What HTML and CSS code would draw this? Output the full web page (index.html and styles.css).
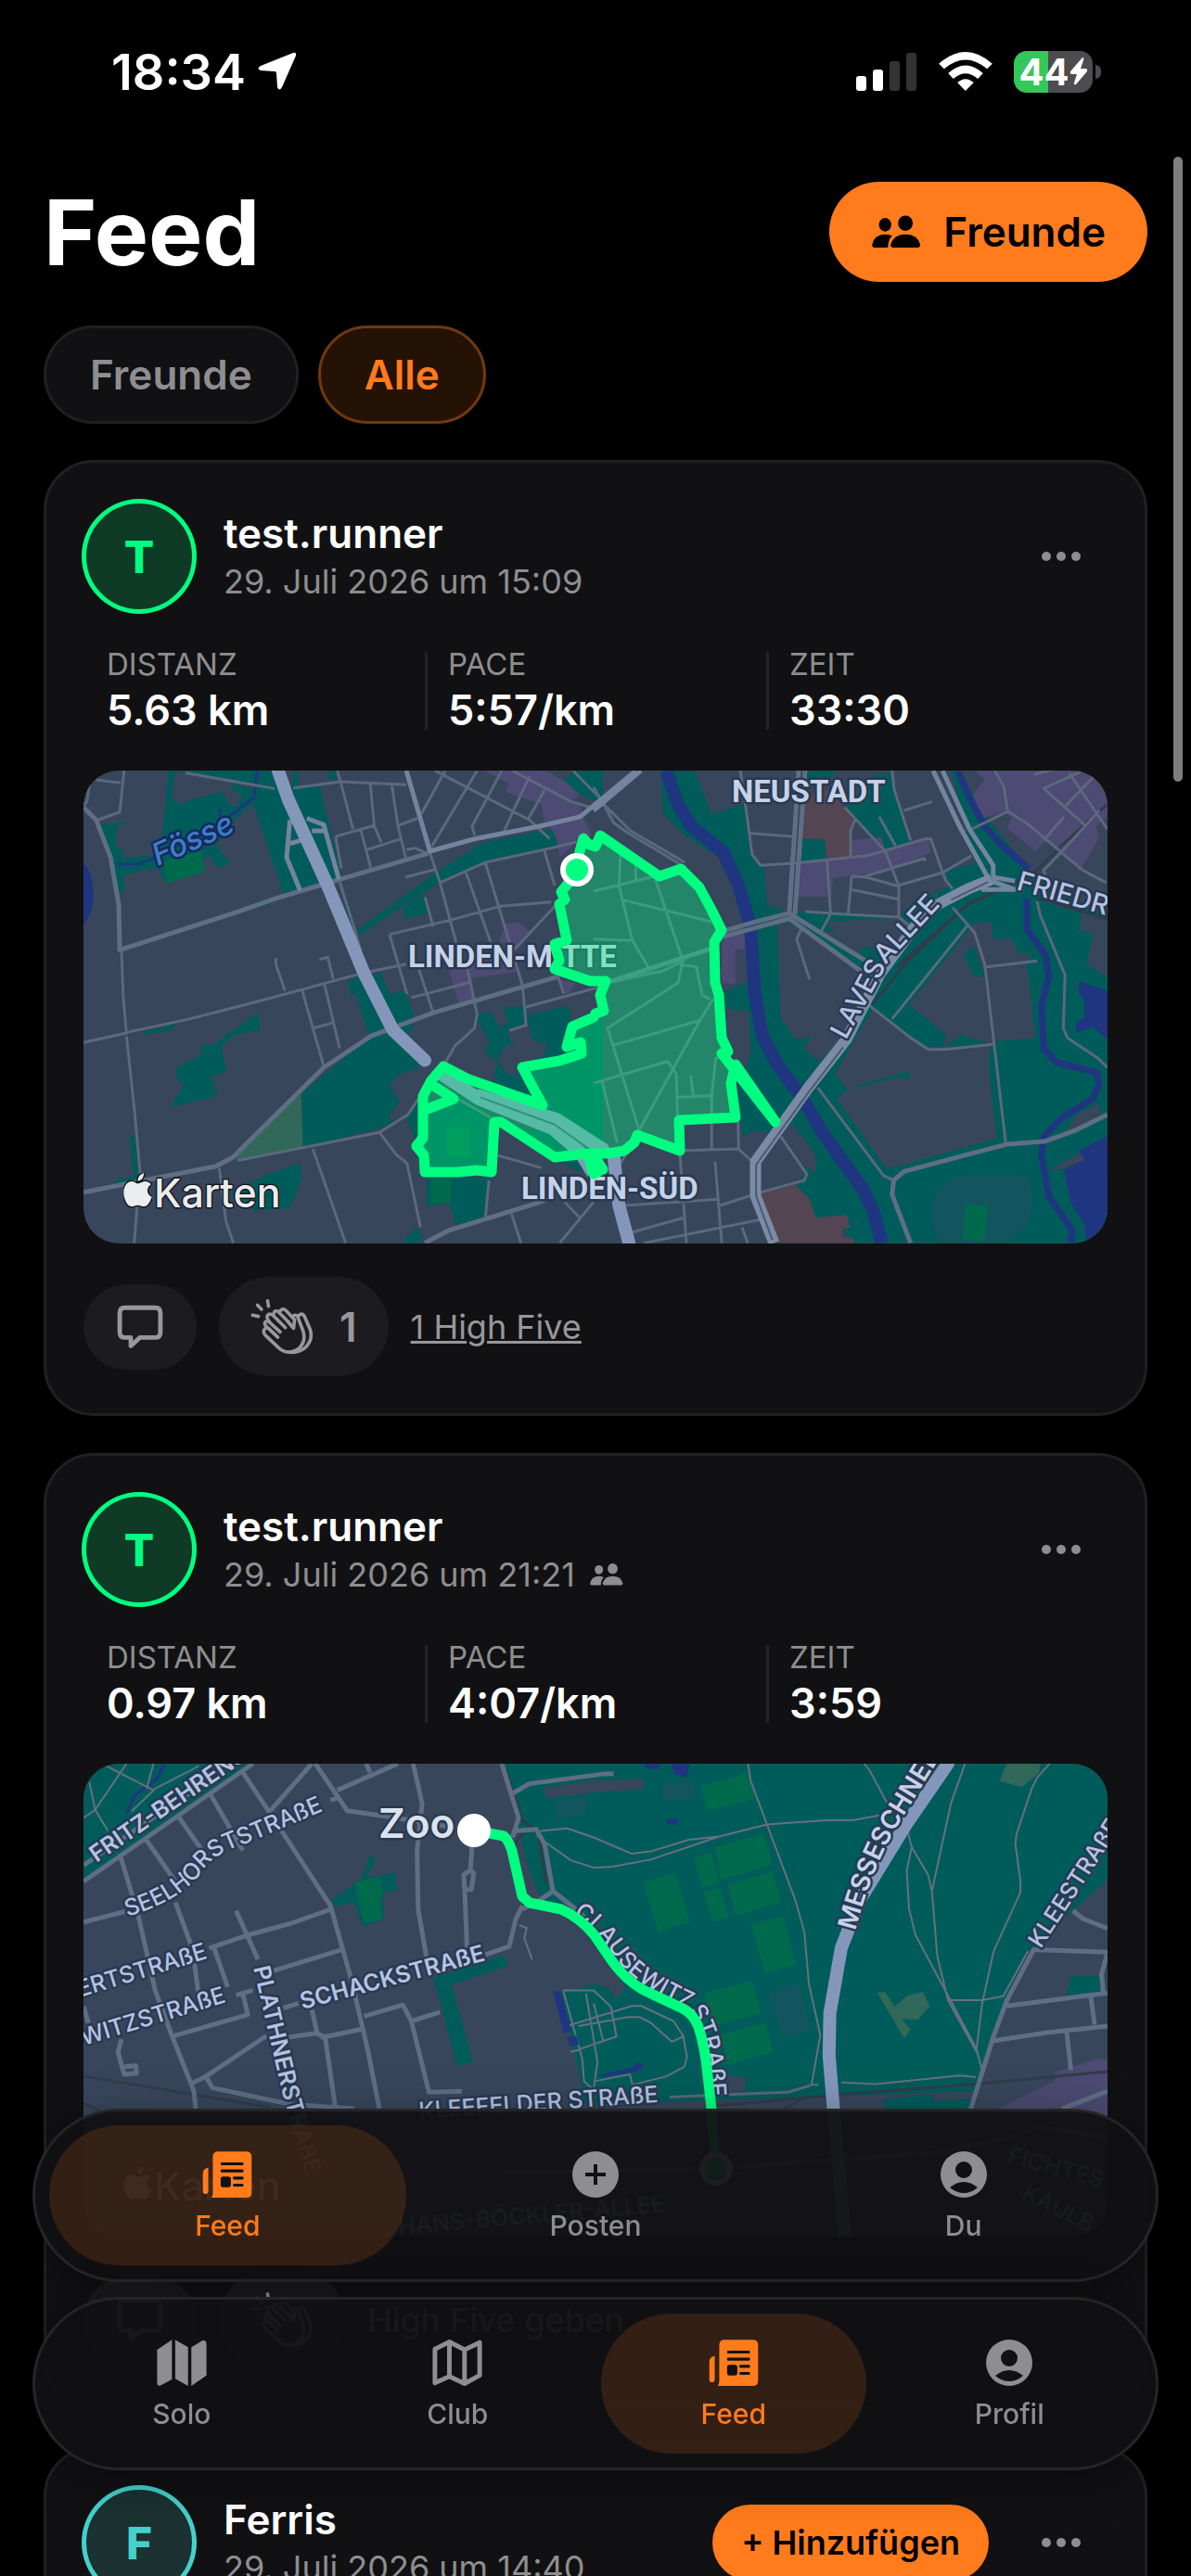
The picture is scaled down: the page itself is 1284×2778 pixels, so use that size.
FILE: index.html
```html
<!DOCTYPE html>
<html lang="de">
<head>
    <meta charset="UTF-8">
    <meta name="viewport" content="width=device-width, initial-scale=1.0">
    <title>Feed</title>
    <link rel="stylesheet" href="styles.css">
</head>
<body>
    <!-- shared icons -->
    <svg class="sprite" aria-hidden="true">
        <symbol id="i-friends" viewBox="0 0 160 106">
            <ellipse cx="43" cy="30" rx="20" ry="22"/>
            <ellipse cx="109" cy="25" rx="24" ry="25"/>
            <path d="M8 104 Q0 104 1 94 Q8 62 43 61 Q56 61 66 66 Q53 78 52 104Z"/>
            <path d="M70 104 Q60 104 61 94 Q72 61 109 61 Q147 61 157 94 Q158 104 148 104Z"/>
        </symbol>
        <symbol id="i-dots" viewBox="0 0 44 12">
            <circle cx="6" cy="6" r="5"/><circle cx="22" cy="6" r="5"/><circle cx="38" cy="6" r="5"/>
        </symbol>
        <symbol id="i-comment" viewBox="136 108 154 146">
            <path d="M162 118 H264 Q281 118 281 136 V201 Q281 218 264 218 H212 L182 246 V218 H162 Q145 218 145 201 V136 Q145 118 162 118Z" fill="none" stroke="currentColor" stroke-width="15" stroke-linejoin="round"/>
        </symbol>
        <symbol id="i-clap" viewBox="568 88 206 184">
            <g fill="none" stroke="currentColor" stroke-width="11" stroke-linecap="round" stroke-linejoin="round">
                <path d="M575 143 L594 147 M591 110 L604 124 M624 96 L627 114"/>
                <path d="M657 215 L627 186 Q613 182 611 197 Q612 205 618 210 L664 253 Q695 276 728 250 Q750 228 740 195 L722 148 Q714 138 706 148"/>
                <path d="M657 215 L620 180 Q610 170 618 164 Q623 160 630 166 L665 198"/>
                <path d="M630 164 Q618 150 625 142 Q634 136 644 146 L682 184"/>
                <path d="M643 144 Q643 126 657 130 L695 168"/>
                <path d="M663 132 Q672 117 684 128 L712 158 L709 186 L690 164"/>
                <path d="M726 144 Q736 134 744 146 L763 190 Q774 225 745 251 Q728 265 700 265"/>
            </g>
        </symbol>
        <symbol id="i-feed" viewBox="387 62 162 154">
            <path d="M438 63 H531 Q549 63 549 81 V198 Q549 216 531 216 H415 Q420 210 420 198 V81 Q420 63 438 63Z"/>
            <path d="M405 116 Q387 120 387 136 V195 Q388 204 396 204 Q404 204 405 195Z"/>
            <g class="ink"><rect x="446" y="99" width="76" height="9" rx="4"/><rect x="446" y="122" width="76" height="10" rx="4"/><rect x="446" y="146" width="34" height="35" rx="8"/><rect x="487" y="146" width="35" height="10" rx="4"/><rect x="487" y="170" width="35" height="9" rx="4"/></g>
        </symbol>
        <symbol id="i-map" viewBox="246 681 150 141">
            <path d="M246 712 L291 682 V802 L258 820 Q246 824 246 812Z M301 682 L340 704 V822 L301 800Z M350 704 L384 684 Q396 682 396 694 V790 L350 822Z"/>
        </symbol>
        <symbol id="i-map-line" viewBox="1134 681 150 141">
            <path d="M1141 710 L1185 688 L1231 712 L1277 690 V790 L1231 815 L1185 793 L1141 813Z M1185 688 V793 M1231 712 V815" fill="none" stroke="currentColor" stroke-width="14" stroke-linejoin="round"/>
        </symbol>
        <symbol id="i-user" viewBox="0 0 50 50">
            <circle cx="25" cy="25" r="25"/>
            <g class="ink"><circle cx="25" cy="20" r="9"/><path d="M10 39 Q25 27 40 39 Q33 45 25 45 Q17 45 10 39Z"/></g>
        </symbol>
        <symbol id="i-plus" viewBox="0 0 50 50">
            <circle cx="25" cy="25" r="25"/>
            <path class="ink" d="M23 14 h4 v9 h9 v4 h-9 v9 h-4 v-9 h-9 v-4 h9Z"/>
        </symbol>
        <symbol id="i-apple" viewBox="0 0 32 40">
            <path d="M16 12 C19 12 21 9 25 9.500 C28 10 30 11 31 13 C25 17 26 25 32 27 C30 33 27 38 23 38 C20 38 19 36.500 16 36.500 C13 36.500 12 38 9 38 C4 38 0 29 0 22 C0 14 5 9.500 9 9.500 C12 9.500 14 12 16 12Z M16 9 C16 4 19 1 23 0 C23 5 20 9 16 9Z"/>
        </symbol>
    </svg>

    <div class="app">
        <div class="status">
            <div class="status-side">
                <span class="clock">18:34</span>
                <svg class="loc" viewBox="0 0 42 42" fill="currentColor"><path d="M38 1 Q42 0 41 4 L26 38 Q23 43 21 38 L20 23 Q20 21 18 21 L3 20 Q-2 18 3 15Z"/></svg>
            </div>
            <div class="status-side">
                <svg class="signal" viewBox="0 0 66 42"><rect y="26" width="11" height="16" rx="3" fill="#fff"/><rect x="18" y="19" width="11" height="23" rx="3" fill="#fff"/><rect x="36" y="10" width="11" height="32" rx="3" fill="#333"/><rect x="54" y="1" width="11" height="41" rx="3" fill="#333"/></svg>
                <svg class="wifi" viewBox="338 72 173 126" fill="#fff"><path d="M338 110 Q424 34 511 110 L494 127 Q424 68 355 127Z M368 141 Q424 90 481 141 L464 159 Q424 124 385 159Z M398 171 Q424 148 451 171 L424 198Z"/></svg>
                <div class="battery">
                    <span class="battery-body">44<svg viewBox="0 0 20 30" fill="#fff"><path d="M14 0 Q16 0 15 3 L12 12 H18 Q20 13 19 15 L7 29 Q4 30 5 27 L8 18 H2 Q0 17 1 15Z"/></svg></span>
                    <span class="battery-tip"></span>
                </div>
            </div>
        </div>

        <header class="header">
            <h1>Feed</h1>
            <button class="friends-btn"><svg class="friends-icon"><use href="#i-friends"/></svg>Freunde</button>
        </header>

        <div class="chips">
            <button class="chip">Freunde</button>
            <button class="chip active">Alle</button>
        </div>

        <main class="feed">
            <article class="card">
                <div class="card-head">
                    <span class="avatar">T</span>
                    <div class="who">
                        <h2>test.runner</h2>
                        <p>29. Juli 2026 um 15:09</p>
                    </div>
                    <button class="more" aria-label="Mehr"><svg><use href="#i-dots"/></svg></button>
                </div>
                <dl class="stats">
                    <div><dt>DISTANZ</dt><dd>5.63 km</dd></div>
                    <div><dt>PACE</dt><dd>5:57/km</dd></div>
                    <div><dt>ZEIT</dt><dd>33:30</dd></div>
                </dl>
                <svg class="map" viewBox="0 0 1104 510" preserveAspectRatio="xMidYMid slice">
                    <!-- west half -->
                    <g transform="translate(-10 -11) scale(.3635 .338)">
                        <path class="park" d="M75 206 L163 194 L127 212 L122 268 L150 297 L135 312 L232 303 L270 295 L262 385 L250 340 L144 367 L152 415 L135 420Z
                            M280 33 L598 33 L640 130 L725 400 L620 425 L530 140 L465 200 L420 270 L464 330 L425 343 L400 305 L380 320 L388 355 L275 390 L250 345 L262 230Z
                            M650 33 L664 33 L670 85 L728 83 L795 375 L740 395 L640 130Z M750 33 H780 L775 65 L755 60Z
                            M840 540 L1070 360 L1210 262 L1490 205 L1490 255 L1225 325 L1085 390 L975 465 L845 560Z M975 470 L1035 430 L1050 490 L978 505Z
                            M812 700 L910 675 L935 745 L980 735 L1008 815 L998 870 L870 870 L835 745 L818 750Z
                            M675 1060 L880 880 L940 860 L1035 975 L960 1005 L935 1040 L965 1090 L935 1130 L945 1160 L920 1170 L678 1235Z
                            M547 803 L551 860 L480 875 L436 912 L452 993 L405 1010 L427 1070 L285 1107 L325 1037 L303 1015 L303 980 L370 945 L385 905 L415 905Z
                            M1195 812 L1235 800 L1262 850 L1285 840 L1273 788 L1335 785 L1335 840 L1285 870 L1304 915 L1280 905 L1255 960 L1225 940 L1220 912 L1232 895 L1198 835Z
                            M1340 812 L1465 782 L1480 840 L1568 800 V1240 L1385 1100 L1240 1040 L1257 960 L1285 1000 L1320 1005 L1330 970 L1395 940 L1402 905 L1360 893Z
                            M985 1140 L1035 1060 L1060 1020 L1240 1130 L1250 1300 L1030 1310 L1005 1190Z M1045 1330 H1230 L1220 1455 L1130 1483 L1112 1410 L1045 1425Z
                            M1250 1150 L1568 1230 V1300 L1490 1310 L1420 1265Z
                            M165 1197 H180 L193 1340 L117 1348 L118 1338 L175 1328Z M460 1380 L565 1325 L670 1285 L675 1335 L640 1428 L535 1437Z
                            M970 1540 L1015 1490 L1035 1520 L1020 1540Z M200 868 L300 840 L290 860 L205 878Z M525 458 L620 425 L570 465Z M1440 80 L1480 33 H1568 V140Z M800 460 L820 480 L835 560Z"/>
                        <path class="land" d="M300 33 L535 75 L535 92 L470 75 L470 97 L500 113 L480 150 L460 140 L440 100 L345 125 L320 142 L288 118Z M1055 1035 L1100 1070 L1060 1090Z"/>
                        <path class="pitch" d="M262 322 L375 290 L388 355 L278 392Z M1058 1335 h60 v78 h-60Z M1105 1170 h70 v95 h-70Z"/>
                        <path class="olive" d="M472 1267 L673 1062 L678 1235 L485 1275Z"/>
                        <path class="quarter" d="M1215 33 H1400 L1460 70 L1500 110 L1470 130 L1395 200 L1385 140 L1280 100 L1290 75 L1265 60Z M1385 120 L1495 130 L1510 180 L1535 240 L1500 250 L1440 310 L1430 250 L1400 190Z M1280 520 L1320 518 L1350 545 L1310 600 L1260 580Z M1110 660 L1305 610 L1310 675 L1180 695 L1190 770 L1140 775 L1120 700Z M1440 700 L1490 710 L1470 740 L1452 745Z"/>
                        <ellipse class="water" cx="10" cy="425" rx="47" ry="105"/>
                        <path class="stream" d="M130 331 H190 L240 310 L430 200 L490 155 L533 120 L543 33 M432 200 V155 M490 1420 H535"/>
                        <path class="road" d="M65 62 L138 72 M148 33 L135 165 L70 190 M45 75 L38 130 L28 145 M330 40 L595 90 M650 88 L790 68 L985 78 M780 33 L790 68 L827 220 M878 75 L890 208 L910 262 M942 80 L960 208 L983 310 M775 243 L890 208 M775 243 L792 345 M850 222 L880 345 M868 285 L965 252 M960 208 L1018 185 M985 285 L1012 280 L1050 300
                            M1100 33 L1030 170 M1070 33 L1350 190 L1410 250 M1195 33 L1060 275 M1268 33 L1180 210 L1188 240 M1350 50 L1275 225 M1395 95 L1345 190 M1300 33 L1470 130 L1530 150 M1480 33 L1568 130
                            M982 373 L1070 348 M1055 295 L1085 390 L1135 590 M1085 390 L1220 325 L1395 285 L1490 260 M1395 290 L1425 400 M1040 437 L1065 530 M935 555 L1115 510 L1265 465 L1415 452 M935 555 L987 745 M1160 352 L1235 580 M1220 328 L1330 720 L1340 845 L1290 862 M1430 460 L1300 610 M1000 757 L1175 708 M1165 660 L1195 810 L1187 855 L1130 910 L1098 970 M1022 665 L1063 800 M850 680 L985 650 M1435 690 L1452 745 M1340 787 L1568 720
                            M598 630 V650 L625 735 M727 635 L752 628 L768 697 M675 730 L740 975 M742 712 L787 918 M708 855 L768 837 M788 390 L832 540 L850 610
                            M905 1187 L957 1260 L987 1285 L1027 1490 M708 1240 L805 1540 M430 1300 L450 1470 L472 1540 M485 1277 L905 1187 L990 1130 L1040 1050 M1255 1260 L1385 1300 M1230 1340 L1220 1455 M1297 1447 L1325 1540 M1440 1540 L1540 1410 M1455 1410 L1500 1460 M155 880 L180 1130 L195 1310 L178 1540 M140 600 L145 750 L155 870 L28 900 M155 868 L330 828 L560 765 L840 683 M1130 1075 L1235 1140"/>
                        <path class="road wide" d="M28 150 L65 190 L108 310 L132 460 L135 605 L480 485 L600 440 L740 395 L880 350 L1050 297 M28 1378 L420 1295 L470 1267 L740 980 L880 880 L1065 805 L1435 690 M1040 1540 L1110 1500 L1395 1405"/>
                        <path class="road main" d="M985 33 L1055 290 L1190 250 L1380 210 L1500 180 L1568 120 M670 415 L630 310 L640 190 M690 185 L740 205 L785 380 M640 265 L690 250 M705 225 L745 225"/>
                        <path class="highway" d="M605 33 L635 125 L750 395 L860 680 L945 860 L1040 957"/>
                        <path class="highway" d="M1095 1005 L1200 1080 L1420 1175 L1500 1250 L1540 1320 M1200 1070 L1430 1145 L1568 1240"/>
                        <path class="gap" d="M1205 1075 L1425 1162 L1520 1235"/>
                    </g>
                    <!-- east half -->
                    <g transform="translate(550 -11) scale(.3635 .338)">
                        <path class="park" d="M200 33 H300 L350 172 L445 138 L480 330 L505 340 L515 460 L580 485 L700 480 L905 500 L950 450 L1060 400 L1040 350 L1130 330 L1060 33 H1080 L1180 200 L1300 360 L1524 500 V1540 H775 L735 1500 L755 1450 L660 1460 L600 1350 L630 1315 L560 1200 L480 1180 L440 1200 L430 1040 L465 940 L460 800 L385 790 L385 740 L470 700 L470 500 L400 330 L270 240 L205 170Z
                            M745 150 L840 40 L885 45 L940 255 L865 290 L775 190Z M640 33 H720 L680 80 L620 80Z"/>
                        <path class="land" d="M545 510 L575 515 L820 680 L750 870 L670 960 L625 920 L645 880 L600 890 L555 820Z M680 545 H715 L685 515 L905 503 L940 540 L870 630 L810 590 L785 615Z
                            M935 780 L1100 560 L1130 520 L1180 515 L1185 570 L1240 570 L1260 615 L1300 620 L1285 650 L1310 885 L1195 895 L1190 910 L1090 875 L1040 915 L1045 875 L1005 840Z
                            M755 1050 L715 1000 L830 790 L985 915 L1180 908 L1170 960 L1195 1205 L895 1297 H865 L722 1080Z M1445 490 L1524 510 V690 L1462 650 L1482 555 L1443 540Z M1350 1310 L1524 1200 V1245 L1400 1300Z M540 1200 L590 1160 L660 1260 V1315 L600 1280Z M1430 1130 L1495 1095 L1505 1130 L1400 1190Z"/>
                        <path class="park" d="M790 1035 L935 990 V1020 L905 1010 L760 1050Z M1095 620 L1130 590 L1160 690 L1130 690Z M885 825 L930 785 L1005 840 L975 885 L940 870Z"/>
                        <path class="bluish" d="M1010 1400 Q1030 1320 1150 1320 L1290 1325 Q1310 1400 1290 1480 L1220 1540 H1030 Q990 1480 1010 1400Z"/>
                        <path class="pitch" d="M1105 1412 L1170 1425 L1157 1535 L1092 1528Z"/>
                        <path class="brown" d="M620 140 L680 80 L745 150 L775 190 L760 220 L762 310 L692 312 L685 252 L612 248Z M495 1385 L600 1355 L640 1400 L660 1460 L750 1450 L760 1490 L735 1500 L740 1525 L770 1525 L775 1540 H545Z"/>
                        <path class="park" d="M615 250 L685 252 L690 320 H610Z"/>
                        <path class="quarter" d="M765 255 L855 245 L865 290 L995 250 L1000 295 L885 345 L765 370 L710 375 L705 435 H605 L610 330 L760 310Z M1130 33 H1524 V180 L1490 210 L1498 250 L1445 345 L1385 300 L1340 255 L1310 290 L1225 215 L1240 180 L1215 165 L1150 185 L1125 110 L1160 60Z M380 560 L455 545 V600 L420 605 V712 H380Z"/>
                        <path class="water" d="M1440 705 L1524 735 V890 L1480 850 L1430 870 V840 L1455 820 V765 L1438 740Z M1524 1200 L1440 1245 L1455 1275 L1395 1305 L1415 1410 L1455 1480 L1460 1540 H1524Z"/>
                        <path class="river" d="M215 33 L250 140 L290 210 L385 295 L430 400 L465 530 L478 740 L500 880 L545 970 L620 1080 L680 1190 L740 1280 L800 1370 L830 1440 L855 1540"/>
                        <path class="stream wide" d="M1080 33 L1120 130 L1160 210 L1210 270 L1290 345 M1285 440 V540 L1340 620 L1350 690 L1328 780 L1335 920 L1375 965 L1490 995 L1500 1030 L1480 1080 L1390 1140 L1335 1200 L1328 1260 L1350 1390 L1420 1500 L1415 1540"/>
                        <path class="rail" d="M1524 140 L1385 275 L1310 355 L1170 430 L1110 460 L940 630 L825 780 M1110 460 L960 600 L900 660 M1320 440 L1524 507"/>
                        <path class="road" d="M450 140 L470 300 L495 335 L600 328 L815 303 L985 250 H1000 L1035 358 L1045 385 L1065 410 M460 232 L597 243 M885 33 L892 95 L940 255 M920 160 L1003 132 M847 180 L895 272 M745 150 L865 290 L905 400 V498 M762 310 V225 L775 190 M765 370 L755 490 M692 320 L703 490 L675 545 M765 370 L805 372 L900 400 L1035 358 L1120 305 M765 413 L905 443 M805 370 L980 313 L985 322 M628 482 L755 492 L905 500 L950 540 M615 540 L602 570 L640 698
                            M1190 33 L1217 85 L1228 163 L1290 205 L1450 350 L1520 390 M1228 163 L1120 220 M1410 40 L1524 220 M1305 45 L1400 20 M1450 33 L1335 90 L1460 210 M1400 145 L1480 55 M1395 180 L1335 255 M1500 160 L1385 295 L1335 350 L1340 375
                            M1065 470 L1110 525 L1130 550 L1160 650 L1222 1220 M1160 660 L1315 640 M1110 525 L885 825 M815 780 L940 885 L993 922 H1040 L1190 905 M1315 450 L1325 495 L1398 685 L1393 855 L1405 885 L1495 950 L1524 980
                            M665 1045 L860 1325 L890 1340 M555 1200 L632 1320 L625 1340 L490 1380 M265 1245 L430 1240 L480 1290 M255 1240 L275 1540 M360 1280 L380 1540 M90 1420 L370 1400 M375 1420 L490 1380 M115 1505 L265 1460 M150 1540 L380 1490 L495 1465 M440 1490 L457 1540 M428 1140 L430 1240 M80 1285 L110 1230 L135 1180 M0 85 L60 200 L100 230 L270 340 M30 140 L110 225 L270 325 M435 33 L450 140
                            M0 417 L180 370 L265 640 L210 670 L20 715 M75 400 L115 575 L165 665 M85 445 L350 515 M80 290 L75 400 M0 570 L110 575 M265 640 L250 710 L40 855 M55 910 L315 830 L135 1180 M315 830 L355 760 M40 850 L135 1180 M0 1030 L220 960 L245 1000 L252 1240 M25 1025 L70 1220 M350 1240 L350 1070 L250 1075 M350 1070 L362 950 L380 945 M288 1005 L295 1070 M255 650 L305 660 L322 750 L345 762 M125 330 V380"/>
                        <path class="road wide" d="M608 33 L580 490 M627 33 L597 490 M385 545 L480 515 L580 488 L830 655 M385 562 L580 505 L790 670 L830 680 M940 1540 L885 1385 L890 1340 L920 1312 L1100 1260 L1225 1225 L1340 1215 L1430 1180 L1524 1130 M50 705 L350 600"/>
                        <path class="road main" d="M0 145 L125 33 M0 160 L140 33 M1007 33 L1085 210 L1170 375 M1035 33 L1115 220 L1185 335 V375 M1180 372 L1250 385 M1180 385 L1250 412 H1150"/>
                        <path class="road big" d="M1180 380 L1110 410 L1020 460 L960 520 L850 680 L750 890 L640 1040 L480 1280 V1390 L535 1540"/>
                        <path class="gap" d="M1170 388 L1060 445 M740 915 L640 1055 L482 1290 V1390 L530 1530"/>
                        <path class="highway" d="M60 1265 L75 1420 L105 1540"/>
                    </g>
                    <g class="place">
                        <text x="699" y="34">NEUSTADT</text>
                        <text x="350" y="212">LINDEN-MITTE</text>
                        <text x="472" y="462">LINDEN-SÜD</text>
                    </g>
                    <path id="lavesallee" d="M822 291 L868 206 L940 128" fill="none"/>
                    <text class="street avenue"><textPath href="#lavesallee">LAVESALLEE</textPath></text>
                    <text class="street avenue" transform="translate(1005 128) rotate(16)">FRIEDR</text>
                    <text class="stream-name" transform="translate(80 103) rotate(-24)">Fösse</text>
                    <path class="area" d="M535 87 L539 73 L552 82 L557 70 L621 114 L644 106 L664 126 L677 150 L688 172 L680 185 L681 229 L688 288 L697 324 L698 337 L703 374 L642 377 L643 410 L597 393 L583 410 L543 413 L508 417 L450 379 L443 379 L440 433 L368 433 L359 405 L366 396 L366 351 L388 319 L413 332 L495 361 L473 320 L537 305 L536 293 L521 298 L527 276 L561 261 L557 242 L563 227 L546 227 L508 214 L513 205 L508 187 L521 183 L513 144 L523 121Z"/>
                    <path class="route" d="M532 107 L535 87 L539 73 L544 79 L552 82 L557 70 L621 114 L644 106 L664 126 L677 150 L688 172 L680 185 L681 229 L685 242 L688 288 L695 303 L688 305 L746 379 L703 317 L698 337 L703 374 L642 377 L643 410 L597 393 L594 401 L583 410 L565 413 L543 413 L550 435 L560 430 L552 418 L543 413 L508 417 L450 379 L443 379 L440 433 L424 431 L404 433 L368 433 L367 415 L359 405 L366 396 L366 351 L375 334 L388 319 L413 332 L495 361 L473 320 L513 313 L537 305 L536 293 L521 298 L527 276 L550 266 L552 262 L561 259 L557 242 L563 227 L546 227 L508 214 L513 205 L508 187 L521 183 L513 144 L519 139 L515 131 L523 121Z M379 341 L399 354 L368 366"/>
                    <circle cx="532" cy="107" r="15" fill="#00ff80" stroke="#fff" stroke-width="6"/>
                    <use class="maps-logo" href="#i-apple" x="43" y="434" width="31" height="38"/>
                    <text class="maps-logo" x="76" y="471">Karten</text>
                </svg>
                <div class="actions">
                    <button class="comment" aria-label="Kommentieren"><svg><use href="#i-comment"/></svg></button>
                    <button class="clap" aria-label="High Five"><svg><use href="#i-clap"/></svg>1</button>
                    <a class="fives" href="#">1 High Five</a>
                </div>
            </article>

            <article class="card">
                <div class="card-head">
                    <span class="avatar">T</span>
                    <div class="who">
                        <h2>test.runner</h2>
                        <p>29. Juli 2026 um 21:21 <svg><use href="#i-friends"/></svg></p>
                    </div>
                    <button class="more" aria-label="Mehr"><svg><use href="#i-dots"/></svg></button>
                </div>
                <dl class="stats">
                    <div><dt>DISTANZ</dt><dd>0.97 km</dd></div>
                    <div><dt>PACE</dt><dd>4:07/km</dd></div>
                    <div><dt>ZEIT</dt><dd>3:59</dd></div>
                </dl>
                <svg class="map" viewBox="0 0 1104 510" preserveAspectRatio="xMidYMid slice">
                    <!-- park side -->
                    <g transform="translate(550 -152) scale(.4107 .3508)">
                        <path class="park" d="M-240 433 H1349 V790 L1140 1010 L1080 1160 L1000 1440 L760 1450 L0 1480 L-60 1460 L-30 1420 L-90 1137 L0 1110 L35 1120 L60 1155 L85 1120 L0 990 L-60 860 L-130 870 L-170 760Z M1240 1145 L1252 1085 H1330 V1135Z M760 1465 L890 1450 L895 1470 L990 1465 V1494 H765Z"/>
                        <path class="land" d="M-130 505 L0 485 L130 480 L132 510 L0 522 L-125 540Z M330 1390 L398 1398 V1440 L335 1450Z"/>
                        <path class="pitch" d="M282 503 L405 463 L425 540 L298 578Z M317 690 L445 650 L470 745 L335 790Z M262 722 L308 708 L330 800 L285 815Z M352 805 L470 765 L492 860 L373 900Z M288 828 L332 813 L355 905 L312 920Z M130 798 L215 768 L252 920 L170 950Z M413 928 L497 900 L530 1050 L450 1078Z M290 1140 L415 1100 L440 1200 L312 1240Z M332 1268 L450 1228 L472 1320 L352 1358Z"/>
                        <path class="bluish" d="M178 493 L262 482 L268 538 L180 550Z M460 1137 L537 1110 L572 1250 L498 1276Z M-100 545 L-20 530 V590 L-95 602Z"/>
                        <path class="olive" d="M745 1138 L765 1135 L790 1180 L825 1145 L865 1135 L882 1180 L850 1220 L808 1218 L832 1250 L815 1278Z M1085 433 H1172 L1170 460 L1125 505 L1065 487Z"/>
                        <path class="quarter" d="M1060 1494 L1210 1410 V1382 L1325 1340 L1349 1345 V1530 H1060Z"/>
                        <path class="water" d="M135 433 h38 v18 l-38 -5Z M205 433 H253 L243 475 L210 465Z M192 603 H222 L220 622 L192 618Z M20 1388 L100 1368 L118 1350 L131 1362 L118 1378 L20 1397Z"/>
                        <path class="rail" d="M320 1485 L650 1450 L1000 1418 L1349 1380 M500 1494 L545 1465"/>
                        <path class="track" d="M405 433 L412 485 L455 620 L530 855 L553 950 L565 1110 L595 1268 L572 1420 H590 M455 620 L610 607 H680 L782 585 M710 433 L725 455 L782 580 M-140 640 L-70 632 L0 660 L100 710 L150 703 L250 667 L330 657 L455 620 M-150 655 L-60 730 L0 753 L50 750 L150 728 L330 657 M975 433 L938 555 L888 825 L902 1025 L930 1160 H1020 L1075 1148 L1140 1010 M825 645 L835 690 L878 775 L888 825 M835 690 L822 760 L828 880 L845 960 L1005 1310 L1018 1370 M930 1160 L1010 1330 M1197 433 L1165 475 L1150 510 L1110 650 L1107 680 L1120 790 V830 L1050 1010 L1020 1170 L1005 1310 M650 1413 L740 1418 L960 1392 L1003 1397
                            M-80 1130 L0 1130 L45 1180 L60 1272 L-60 1320 M-70 1240 L100 1178 H125 L210 1225 L235 1270 L245 1335 L238 1365 L190 1395 L102 1420 L95 1388 L0 1410 M-40 1240 L90 1212 H120 L150 1230 L205 1288 L235 1272 M0 1170 L25 1285 M-80 1130 L-30 1340 L-25 1410 L0 1435 L10 1350 L-20 1140"/>
                        <path class="road" d="M200 1458 L510 1443 L570 1422"/>
                        <path class="road wide" d="M990 1494 L1050 1270 L1085 1160 L1155 1005 L1349 1013 M1085 1178 L1349 1138 M1050 1285 L1190 1260 L1349 1240 M1305 1150 L1315 1235 M1242 1260 L1253 1375 M1349 1015 L1333 1080 L1338 1135 M1258 885 L1285 910 L1349 940 M1349 1440 L1230 1494 M900 1630 L1100 1580 L1160 1550 L1349 1580 M-250 1690 L300 1680 L640 1650 L900 1630"/>
                        <path class="highway" d="M930 433 L820 620 L700 850 L650 1000 L620 1200 L618 1330 L630 1500 L660 1890"/>
                    </g>
                    <!-- town side -->
                    <g transform="translate(-10 -152) scale(.3635 .3508)">
                        <path class="park" d="M28 433 H530 L28 790Z M765 850 L850 790 L878 712 L896 725 L865 785 L950 767 L960 822 L915 830 L918 912 L855 932 L830 860 L770 873Z M1065 1090 L1275 1020 L1288 1055 L1120 1112 L1183 1350 L1135 1363Z M1285 990 L1320 880 L1310 940Z M660 1494 L670 1478 L800 1494Z"/>
                        <path class="pitch" d="M830 800 L905 780 L918 830 L905 860 L917 910 L860 925Z"/>
                        <path class="water" d="M1420 1135 L1442 1132 L1475 1257 L1452 1262Z M1462 1275 L1490 1270 L1497 1297 L1470 1302Z"/>
                        <path class="stream" d="M268 433 L245 480 L220 500 L180 530 L155 585"/>
                        <path class="track" d="M28 600 L62 575 L155 433 M45 490 L62 575 L100 640 M95 440 L235 515 M235 433 L215 510 M370 440 L240 510 L170 580 M1320 930 L1342 938 L1335 970 L1358 1035"/>
                        <path class="rail" d="M28 1395 L180 1420 L580 1490 M28 1478 L75 1500 M1280 450 L1330 610 L1375 640 L1400 800 M1300 700 Q1340 600 1385 660"/>
                        <path class="road wide" d="M28 795 L530 433 M28 745 L470 433 M500 460 L590 600 L760 870 L820 1090 L870 1310 L905 1494 M580 580 L705 433 M400 520 L500 700 M305 590 L400 730 M212 665 L310 810 M135 710 L190 900 L240 1130 L290 1270 L355 1440 L360 1494 M300 860 L350 1000 L370 1150 M28 920 L150 888 M715 433 L810 578 L940 597 L1130 630 M780 515 L960 433 M865 433 L878 460 M1005 433 L1032 555 L1017 700 L1020 880 L1045 1030 M1180 690 L1175 760 L1155 775 L1158 820 H1178 L1185 770 L1175 760 M1158 820 L1165 1000 M400 1000 L515 960 L640 925 L765 880 M480 885 L545 1035 M415 1000 L455 1120 M590 1070 L800 1003 M500 1140 L515 1205 L290 1272 M480 1145 L530 1130 M620 1185 L665 1170 M705 1190 L720 1260 L745 1280 L775 1494 M630 1275 L715 1262 L745 1273 L860 1248 M860 1210 L975 1175 L1000 1225 L1085 1197 M1000 1225 L1052 1443 L1150 1440 M345 1418 L390 1395 L570 1270 M390 1395 L410 1430 L640 1480 L830 1494 M140 1280 L130 1320 L148 1388 L185 1385 L183 1362 L150 1365 M28 1180 L42 1230 M760 545 L780 540 M1220 1020 L1290 995 L1310 910 L1330 870 M1268 433 L1318 600 L1300 660 M1310 640 L1370 635 L1395 680 L1420 825 L1385 850 L1330 880 M1300 525 L1350 495 L1568 465 H1600 M1420 825 L1500 890 L1540 940"/>
                    </g>
                    <path id="fritz" d="M14 107 L190 -14" fill="none"/>
                    <path id="seelhorst" d="M47 165 Q100 150 125 120 Q140 96 175 86 L280 42" fill="none"/>
                    <path id="plathner" d="M183 220 L215 357 L250 480" fill="none"/>
                    <path id="messe" d="M832 181 Q852 105 882 60 L950 -50" fill="none"/>
                    <path id="clausewitz" d="M528 163 Q550 175 575 211 Q592 236 648 262 Q668 280 674 336 L680 440" fill="none"/>
                    <text class="street strong"><textPath href="#fritz">FRITZ-BEHRENS-ALLEE</textPath></text>
                    <text class="street"><textPath href="#seelhorst">SEELHORSTSTRAßE</textPath></text>
                    <text class="street" transform="translate(-4 252) rotate(-17)">ERTSTRAßE</text>
                    <text class="street" transform="translate(0 304) rotate(-17)">WITZSTRAßE</text>
                    <text class="street strong"><textPath href="#plathner">PLATHNERSTRAßE</textPath></text>
                    <text class="street strong" transform="translate(236 265) rotate(-15)">SCHACKSTRAßE</text>
                    <text class="street strong large"><textPath href="#messe">MESSESCHNELLWEG</textPath></text>
                    <text class="street" transform="translate(1032 200) rotate(-57)">KLEESTRAßE</text>
                    <text class="street"><textPath href="#clausewitz">CLAUSEWITZSTRAßE</textPath></text>
                    <text class="street" transform="translate(362 383) rotate(-4)">KLEEFELDER STRAßE</text>
                    <text class="street strong" transform="translate(340 508) rotate(-5)">HANS-BÖCKLER-ALLEE</text>
                    <text class="street" transform="translate(995 430) rotate(15)">FICHTES</text>
                    <text class="street" transform="translate(1010 468) rotate(27)">KAULB</text>
                    <text class="station" x="318" y="80">Zoo</text>
                    <path class="route" d="M421 72 L453 78 Q458 82 462 94 L473 143 L481 150 L515 157 Q535 166 550 184 L570 213 Q588 238 612 248 L646 264 Q658 270 663 284 Q670 305 673 336 L677 372 L682 437"/>
                    <circle cx="421" cy="72" r="18" fill="#fff"/>
                    <circle cx="682" cy="437" r="15" fill="#00ff80" stroke="#fff" stroke-width="6"/>
                    <use class="maps-logo" href="#i-apple" x="43" y="434" width="31" height="38"/>
                    <text class="maps-logo" x="76" y="471">Karten</text>
                </svg>
                <div class="actions">
                    <button class="comment" aria-label="Kommentieren"><svg><use href="#i-comment"/></svg></button>
                    <button class="clap" aria-label="High Five"><svg><use href="#i-clap"/></svg></button>
                    <span class="fives">High Five geben</span>
                </div>
            </article>

            <article class="card">
                <div class="card-head">
                    <span class="avatar teal">F</span>
                    <div class="who">
                        <h2>Ferris</h2>
                        <p>29. Juli 2026 um 14:40</p>
                    </div>
                    <button class="add-btn">+ Hinzufügen</button>
                    <button class="more" aria-label="Mehr"><svg><use href="#i-dots"/></svg></button>
                </div>
            </article>
        </main>
    </div>

    <div class="scrollbar"></div>

    <div class="bars">
        <nav class="bar" aria-label="Feed">
            <a class="active" href="#"><svg><use href="#i-feed"/></svg>Feed</a>
            <a href="#"><svg><use href="#i-plus"/></svg>Posten</a>
            <a href="#"><svg><use href="#i-user"/></svg>Du</a>
        </nav>
        <nav class="bar" aria-label="App">
            <a href="#"><svg><use href="#i-map"/></svg>Solo</a>
            <a href="#"><svg><use href="#i-map-line"/></svg>Club</a>
            <a class="active" href="#"><svg><use href="#i-feed"/></svg>Feed</a>
            <a href="#"><svg><use href="#i-user"/></svg>Profil</a>
        </nav>
    </div>
</body>
</html>
```
FILE: styles.css
```css
* {
    margin: 0;
    padding: 0;
    box-sizing: border-box;
}

:root {
    --orange: #ff7b1c;
    --card: #111113;
    --line: #202022;
    --grey: #8e8e90;
}

body {
    background: #000;
    color: #fff;
    font-family: Inter, "Liberation Sans", sans-serif;
    overflow: hidden;
}

button {
    border: none;
    font: inherit;
    color: inherit;
    background: none;
    cursor: pointer;
}

a {
    color: inherit;
    text-decoration: none;
}

svg {
    fill: currentColor;
    flex: none;
}

.sprite {
    position: absolute;
    width: 0;
    height: 0;
}

.app {
    height: 100vh;
    overflow: hidden;
    padding: 0 47px;
}

/* status bar */
.status {
    display: flex;
    justify-content: space-between;
    align-items: center;
    height: 154px;
    padding: 0 50px 0 73px;
}

.status-side {
    display: flex;
    align-items: center;
    gap: 23px;
}

.clock {
    font-size: 54px;
    font-weight: 600;
}

.loc {
    width: 42px;
    height: 42px;
    margin-left: -10px;
}

.signal {
    width: 66px;
    height: 42px;
}

.wifi {
    width: 58px;
    height: 42px;
}

.battery {
    display: flex;
    align-items: center;
    gap: 3px;
}

.battery-body {
    display: flex;
    align-items: center;
    justify-content: center;
    width: 85px;
    height: 45px;
    border-radius: 14px;
    background: linear-gradient(90deg, #34c759 44%, #4d4d4f 44%);
    font-size: 40px;
    font-weight: 700;
}

.battery-body svg {
    width: 20px;
    height: 30px;
}

.battery-tip {
    width: 6px;
    height: 15px;
    border-radius: 0 6px 6px 0;
    background: #4d4d4f;
}

/* header */
.header {
    display: flex;
    justify-content: space-between;
    align-items: center;
    height: 108px;
    margin-top: 42px;
}

h1 {
    font-size: 98px;
    font-weight: 700;
}

.friends-btn {
    display: flex;
    align-items: center;
    gap: 24px;
    height: 108px;
    padding: 0 45px 0 46px;
    border-radius: 54px;
    background: var(--orange);
    color: #000;
    font-size: 44px;
    font-weight: 600;
}

.friends-icon {
    width: 53px;
    height: 36px;
}

.chips {
    display: flex;
    gap: 21px;
    margin-top: 47px;
}

.chip {
    height: 106px;
    padding: 0 47px;
    border: 3px solid var(--line);
    border-radius: 53px;
    background: var(--card);
    color: var(--grey);
    font-size: 44px;
    font-weight: 600;
}

.chip.active {
    border-color: #70380f;
    background: #241205;
    color: var(--orange);
}

/* cards */
.feed {
    display: flex;
    flex-direction: column;
    gap: 40px;
    margin-top: 39px;
}

.card {
    padding: 40px;
    border: 3px solid var(--line);
    border-radius: 54px;
    background: var(--card);
}

.card-head {
    display: flex;
    align-items: center;
    height: 122px;
}

.avatar {
    display: flex;
    align-items: center;
    justify-content: center;
    width: 120px;
    height: 120px;
    border: 3px solid #00ff80;
    border-radius: 50%;
    box-shadow: 0 0 0 2px #00ff80;
    background: #0f3a26;
    color: #00ff80;
    font-size: 48px;
    font-weight: 800;
}

.avatar.teal {
    border-color: #45d1cb;
    box-shadow: 0 0 0 2px #45d1cb;
    background: #1b3132;
    color: #45d1cb;
}

.who {
    flex: 1;
    margin-left: 31px;
}

.who h2 {
    font-size: 44px;
    line-height: 54px;
    font-weight: 600;
}

.who p {
    display: flex;
    align-items: center;
    gap: 16px;
    color: var(--grey);
    font-size: 36px;
    line-height: 50px;
}

.who p svg {
    width: 36px;
    height: 24px;
}

.more {
    padding: 24px 28px;
    color: var(--grey);
}

.more svg {
    display: block;
    width: 44px;
    height: 12px;
}

.add-btn {
    height: 82px;
    margin-right: 28px;
    padding: 0 31px;
    border-radius: 41px;
    background: var(--orange);
    color: #000;
    font-size: 36px;
    font-weight: 600;
}

.stats {
    display: grid;
    grid-template-columns: repeat(3, 1fr);
    margin-top: 34px;
}

.stats div {
    position: relative;
    padding-left: 25px;
}

.stats div + div::before {
    content: "";
    position: absolute;
    left: 0;
    top: 8px;
    bottom: 8px;
    width: 3px;
    background: #242426;
}

.stats dt {
    color: var(--grey);
    font-size: 33px;
    line-height: 42px;
}

.stats dd {
    font-size: 45px;
    font-weight: 600;
    line-height: 58px;
}

.map {
    display: block;
    width: 100%;
    aspect-ratio: 1104 / 510;
    margin-top: 36px;
    border-radius: 38px;
    background: #38465c;
}

.actions {
    display: flex;
    align-items: center;
    gap: 24px;
    margin-top: 36px;
    color: #98989b;
}

.actions button {
    display: flex;
    align-items: center;
    gap: 28px;
    background: #1c1b20;
}

.comment {
    height: 92px;
    padding: 0 36px;
    border-radius: 46px;
}

.comment svg {
    width: 50px;
    height: 47px;
}

.clap {
    height: 107px;
    padding: 0 34px;
    border-radius: 54px;
    font-size: 44px;
    font-weight: 600;
}

.clap svg {
    width: 68px;
    height: 61px;
}

.fives {
    font-size: 36px;
}

a.fives {
    text-decoration: underline;
    text-decoration-thickness: 3px;
}

/* map drawing */
.park { fill: #005c5a; }
.land { fill: #38465c; }
.pitch { fill: #006a4d; }
.olive { fill: #326859; }
.quarter { fill: #4d4a73; }
.brown { fill: #534551; }
.bluish { fill: #12555f; }
.water { fill: #203580; }

.road, .highway, .river, .stream, .rail, .track, .gap {
    fill: none;
    stroke: #5b687d;
    stroke-width: 3px;
    stroke-linejoin: round;
    vector-effect: non-scaling-stroke;
}

.road.wide {
    stroke: #5f6e84;
    stroke-width: 5px;
}

.road.main {
    stroke: #75849e;
    stroke-width: 5px;
}

.road.big {
    stroke: #7b8ba5;
    stroke-width: 12px;
}

.gap {
    stroke: #4a5a70;
    stroke-width: 2px;
}

.highway {
    stroke: #8497bb;
    stroke-width: 14px;
    stroke-linecap: round;
}

.river {
    stroke: #203580;
    stroke-width: 14px;
}

.stream {
    stroke: #203580;
}

.stream.wide {
    stroke-width: 7px;
}

.rail {
    stroke: #303c4a;
}

.track {
    stroke: #667080;
    stroke-width: 2px;
}

.map text {
    paint-order: stroke;
    stroke: #2a3950;
    stroke-width: 5px;
    stroke-linejoin: round;
}

.place {
    fill: #c5d2e8;
    font-family: Roboto, sans-serif;
    font-size: 33px;
    font-weight: 700;
}

.street {
    fill: #b4c3e4;
    font-size: 25px;
    font-weight: 500;
}

.street.strong {
    font-weight: 600;
}

.street.large {
    fill: #c5d2ec;
    font-size: 28px;
}

.street.avenue {
    font-size: 29px;
}

.station {
    fill: #dbe3ee;
    font-size: 44px;
    font-weight: 600;
}

.map .stream-name {
    fill: #3f7dc9;
    stroke: #162a5c;
    font-size: 33px;
    font-style: italic;
    font-weight: 500;
}

.area {
    fill: #00ff80;
    fill-opacity: .35;
}

.route {
    fill: none;
    stroke: #00ff80;
    stroke-width: 11px;
    stroke-linecap: round;
    stroke-linejoin: round;
}

.map .maps-logo {
    fill: #ebecee;
    stroke: #15181d;
    stroke-width: 3px;
    font-size: 43px;
    font-weight: 500;
    paint-order: stroke;
}

/* floating bars */
.scrollbar {
    position: fixed;
    top: 169px;
    right: 9px;
    width: 10px;
    height: 674px;
    border-radius: 5px;
    background: #7f7f7f;
}

.bars {
    position: fixed;
    left: 35px;
    right: 35px;
    bottom: 114px;
    display: flex;
    flex-direction: column;
    gap: 16px;
}

.bar {
    display: flex;
    gap: 12px;
    padding: 15px;
    border: 3px solid #252527;
    border-radius: 94px;
    background: rgba(17, 17, 19, .95);
    box-shadow: 0 10px 50px rgba(0, 0, 0, .35);
    color: var(--grey);
    font-size: 30px;
    font-weight: 500;
    line-height: 36px;
}

.bar a {
    flex: 1;
    display: flex;
    flex-direction: column;
    align-items: center;
    justify-content: center;
    gap: 12px;
    height: 151px;
    padding-top: 2px;
    border-radius: 76px;
}

.bar svg {
    width: 54px;
    height: 50px;
}

.bar a.active {
    background: rgba(255, 123, 28, .15);
    color: var(--orange);
}

.ink {
    fill: var(--card);
}

.active .ink {
    fill: #352117;
}
```
